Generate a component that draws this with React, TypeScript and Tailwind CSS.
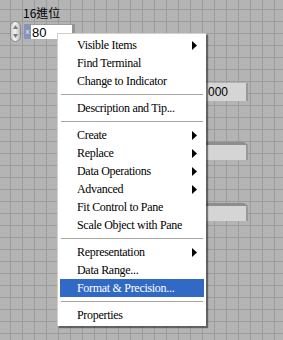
import type { ReactNode } from "react";

type Entry = { label: string; sub?: boolean; active?: boolean } | "sep";

const MENU: Entry[] = [
  { label: "Visible Items", sub: true },
  { label: "Find Terminal" },
  { label: "Change to Indicator" },
  "sep",
  { label: "Description and Tip..." },
  "sep",
  { label: "Create", sub: true },
  { label: "Replace", sub: true },
  { label: "Data Operations", sub: true },
  { label: "Advanced", sub: true },
  { label: "Fit Control to Pane" },
  { label: "Scale Object with Pane" },
  "sep",
  { label: "Representation", sub: true },
  { label: "Data Range..." },
  { label: "Format & Precision...", active: true },
  "sep",
  { label: "Properties" },
];

function Arrow({ white }: { white?: boolean }) {
  return (
    <svg width="5" height="9" viewBox="0 0 5 9" className="shrink-0">
      <path d="M0 0 L5 4.5 L0 9 Z" fill={white ? "#fff" : "#000"} />
    </svg>
  );
}

function MenuItem({ label, sub, active }: { label: string; sub?: boolean; active?: boolean }) {
  return (
    <div
      className={`flex h-[18px] items-center justify-between pl-[17px] pr-[7px] ${
        active ? "bg-[#316ac5] text-white" : "text-black"
      }`}
    >
      <span className="whitespace-nowrap">{label}</span>
      {sub ? <Arrow white={active} /> : null}
    </div>
  );
}

// background numeric indicator, mostly hidden behind the popup
function BgField({ top, children }: { top: number; children?: ReactNode }) {
  return (
    <div
      className="absolute left-[150px] flex h-[18px] w-[98px] flex-col"
      style={{ top }}
    >
      <div className="h-[3px] bg-[#8e8e8e] [clip-path:polygon(0_0,96%_0,100%_100%,0_100%)]" />
      <div className="flex flex-1">
        <div className="flex flex-1 items-center bg-[#d5d5d5] pl-[58px] font-['Liberation_Sans',sans-serif] text-[12px] text-black">
          {children}
        </div>
        <div className="w-[2px] bg-[#9a9a9a]" />
      </div>
    </div>
  );
}

export default function App() {
  return (
    <div className="relative h-[340px] w-[283px] overflow-hidden bg-[#b4b4b4] bg-[linear-gradient(to_right,#9c9c9c_1px,transparent_1px),linear-gradient(to_bottom,#9c9c9c_1px,transparent_1px)] bg-[size:12px_12px] bg-[position:10px_9px]">
      {/* control label */}
      <div className="absolute left-[23px] top-[5px] font-['Noto_Sans_CJK_TC',sans-serif] text-[12px] leading-[16px] text-black">
        16進位
      </div>

      {/* increment / decrement */}
      <div className="absolute left-[10px] top-[21px] flex h-[21px] w-[11px] flex-col items-center justify-between rounded-full border border-[#8a8a8a] bg-[linear-gradient(to_right,#cfcfcf,#f4f4f4_45%,#b9b9b9)] py-[3px]">
        <svg width="5" height="4" viewBox="0 0 5 4">
          <path d="M2.5 0 L5 4 L0 4 Z" fill="#7a7a7a" />
        </svg>
        <svg width="5" height="4" viewBox="0 0 5 4">
          <path d="M0 0 L5 0 L2.5 4 Z" fill="#7a7a7a" />
        </svg>
      </div>

      {/* numeric control with radix */}
      <div className="absolute left-[24px] top-[24px] flex h-[15px]">
        <div className="flex w-[7px] items-center justify-center bg-[#8496b8] font-['Liberation_Sans',sans-serif] text-[8px] leading-none text-[#e8ecf5]">
          x
        </div>
        <div className="flex w-[41px] items-center border-t border-[#9a9a9a] bg-white pl-[1px] font-['Liberation_Sans',sans-serif] text-[13px] leading-none text-black">
          80
        </div>
        <div className="w-[3px] bg-[#949494]" />
      </div>

      <BgField top={83}>000</BgField>
      <BgField top={142} />
      <BgField top={203} />

      {/* shortcut menu */}
      <div className="absolute left-[57px] top-[33px] w-[149px] border-l border-t border-[#d4d0c8] bg-white px-[2px] pb-[2px] pt-[2px] font-['Liberation_Serif',serif] text-[12px] tracking-[-0.3px] shadow-[2px_2px_1px_rgba(0,0,0,0.45)]">
        {MENU.map((e, i) =>
          e === "sep" ? (
            <div key={i} className="flex h-[9px] items-center px-[1px]">
              <div className="h-px w-full bg-[#a7a6a0]" />
            </div>
          ) : (
            <MenuItem key={i} {...e} />
          ),
        )}
      </div>
    </div>
  );
}
